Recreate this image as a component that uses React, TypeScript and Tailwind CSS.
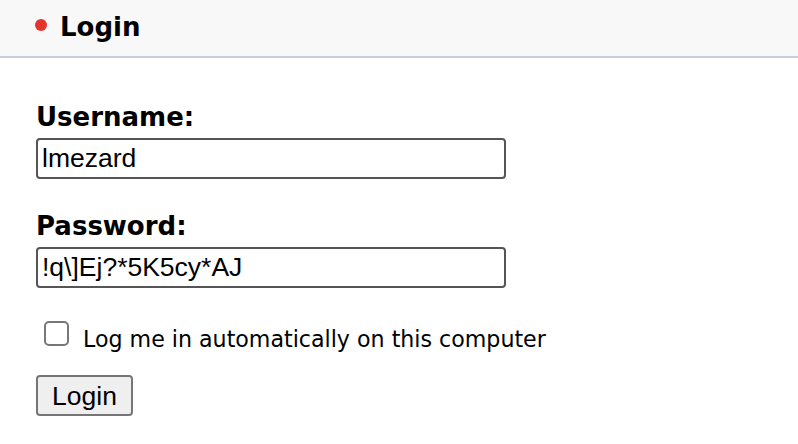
import React from "react";

export default function App() {
  return (
    <div className="w-[798px] h-[444px] bg-white text-black overflow-hidden">
      <header className="h-[58px] bg-[#f8f8f8] border-b-2 border-[#c3cedf] flex items-start pl-[35px]">
        <span className="mt-[19px] w-[12px] h-[12px] rounded-full bg-[#e5352b] shrink-0" />
        <h1 className="mt-[12px] ml-[13px] font-bold text-[26px] leading-[30px] font-['DejaVu_Sans',sans-serif]">
          Login
        </h1>
      </header>
      <form className="pl-[36px] flex flex-col items-start" onSubmit={(e) => e.preventDefault()}>
        <label className="mt-[44px] font-bold text-[26px] leading-[30px] font-['DejaVu_Sans',sans-serif]">
          Username:
        </label>
        <input
          type="text"
          defaultValue="lmezard"
          className="mt-[6px] w-[470px] h-[41px] border-2 border-[#555555] rounded-[4px] pl-[4px] text-[26.5px] leading-[30px] font-['Liberation_Sans',Arial,sans-serif] outline-none"
        />
        <label className="mt-[32px] font-bold text-[26px] leading-[30px] font-['DejaVu_Sans',sans-serif]">
          Password:
        </label>
        <input
          type="text"
          defaultValue="!q\]Ej?*5K5cy*AJ"
          className="mt-[6px] w-[470px] h-[41px] border-2 border-[#555555] rounded-[4px] pl-[4px] text-[26.5px] leading-[30px] font-['Liberation_Sans',Arial,sans-serif] outline-none"
        />
        <div className="mt-[33px] h-[32px] flex items-start">
          <input
            type="checkbox"
            className="ml-[8px] w-[25px] h-[25px] appearance-none border-2 border-[#777777] rounded-[5px] bg-white shrink-0"
          />
          <span className="ml-[14px] mt-[5px] text-[22.15px] leading-[26px] font-['DejaVu_Sans',sans-serif]">
            Log me in automatically on this computer
          </span>
        </div>
        <button
          type="submit"
          className="mt-[22px] w-[97px] h-[41px] bg-[#efefef] border-2 border-[#767676] rounded-[4px] text-[26.5px] leading-[30px] font-['Liberation_Sans',Arial,sans-serif] flex items-center justify-center"
        >
          Login
        </button>
      </form>
    </div>
  );
}
